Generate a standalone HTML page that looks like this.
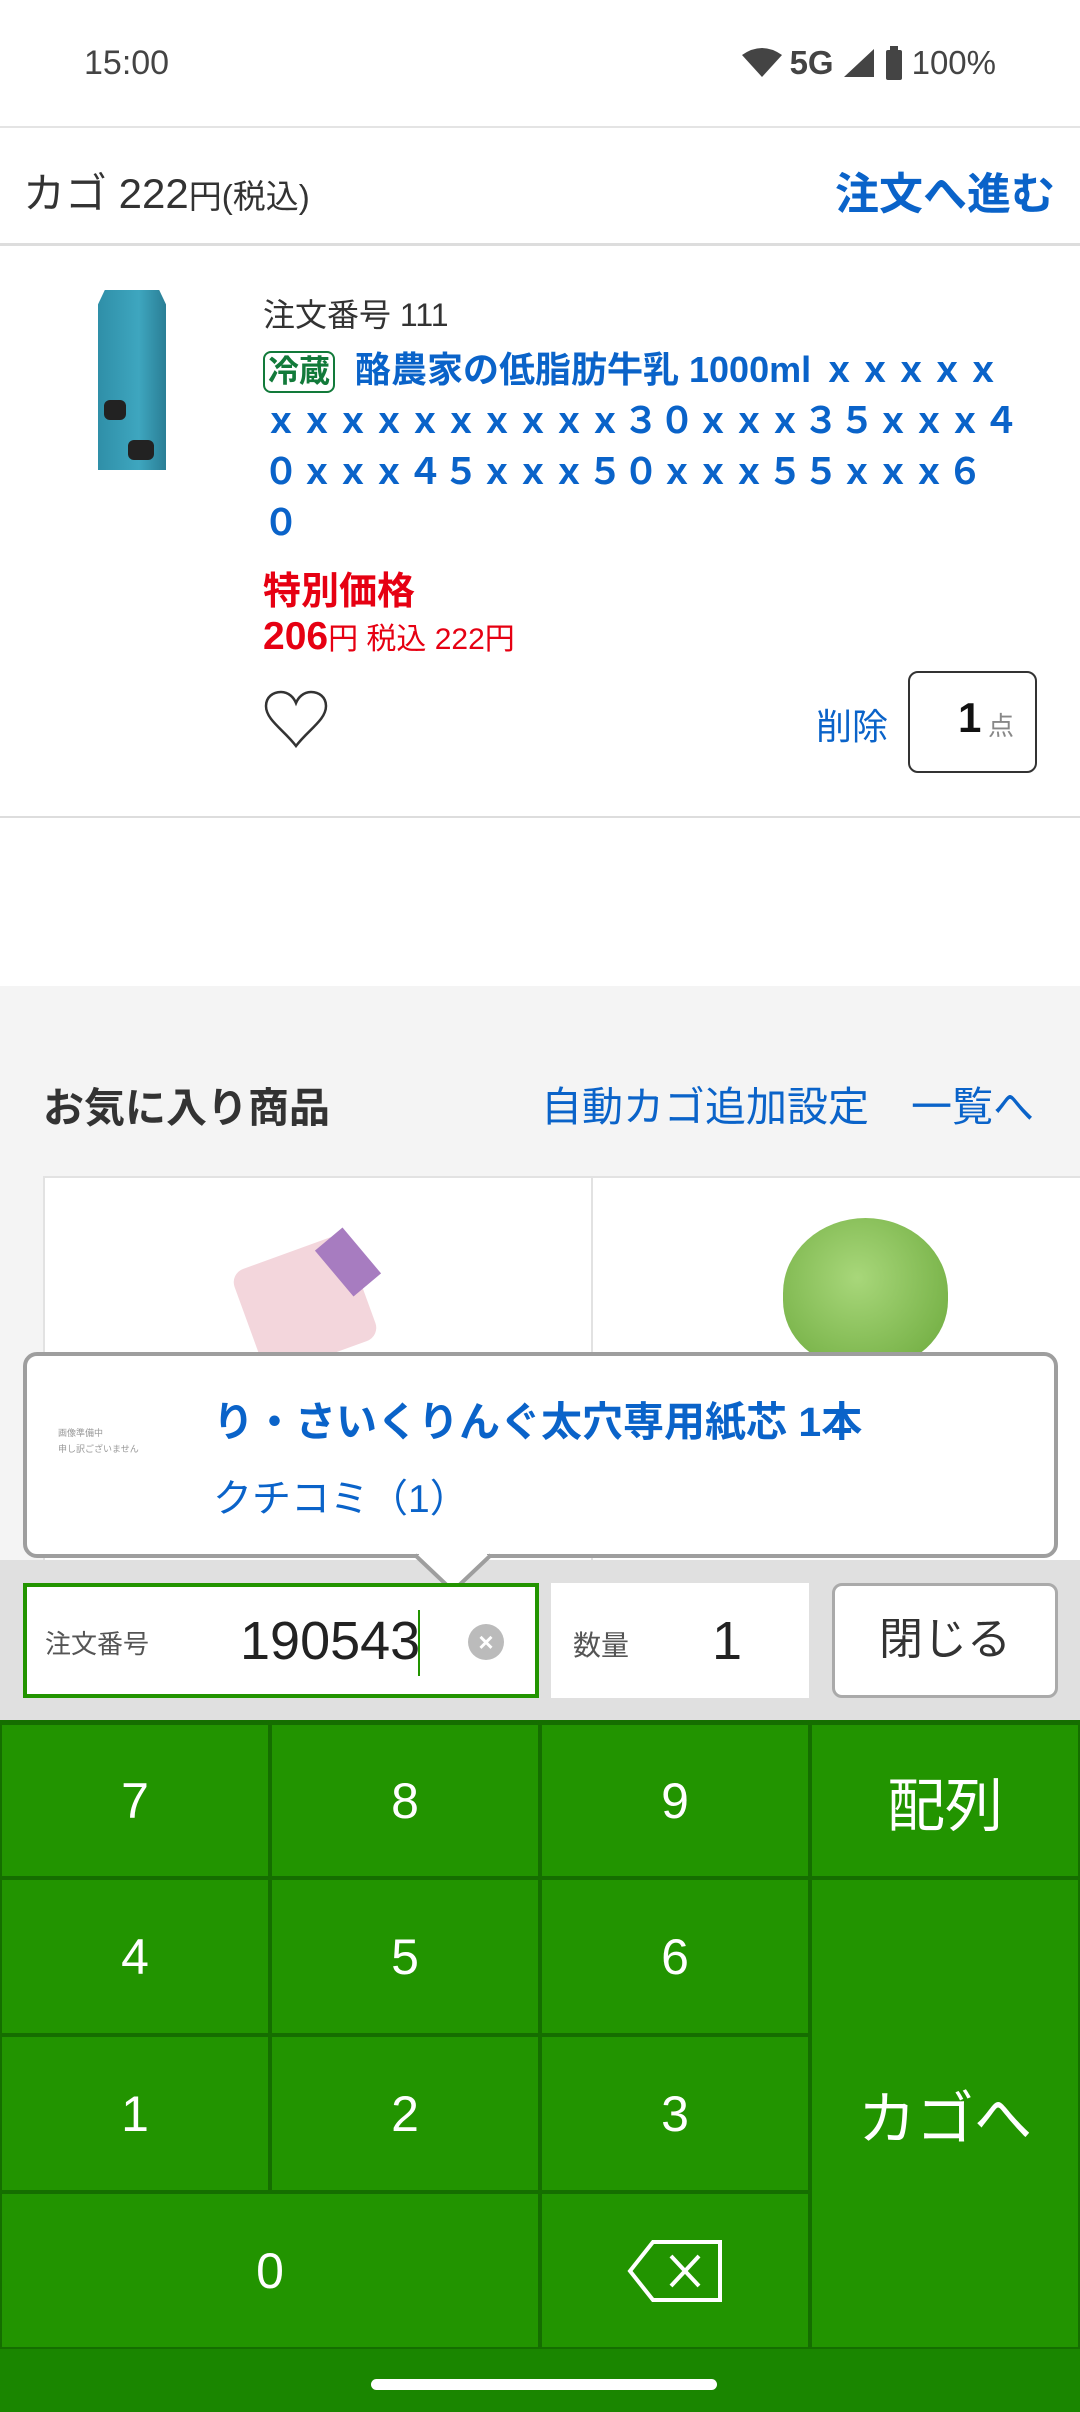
<!DOCTYPE html>
<html><head><meta charset="utf-8"><style>
*{margin:0;padding:0;box-sizing:border-box}
body{width:1080px;height:2412px;position:relative;overflow:hidden;background:#fff;font-family:"Liberation Sans","Noto Sans CJK JP",sans-serif;color:#222}
.a{position:absolute;white-space:nowrap}
.blue{color:#0a63c9}
.key{position:absolute;background:#229400;color:#fff;font-size:50px;display:flex;align-items:center;justify-content:center;border:2px solid #156e00}
</style></head><body>
<div class="a" style="left:84px;top:44px;font-size:34px;color:#444">15:00</div>
<div class="a" style="right:84px;top:44px;font-size:33px;color:#444;display:flex;align-items:center;gap:8px">
<svg width="40" height="32" viewBox="0 0 40 32"><path d="M20 30 L0 8 Q20 -6 40 8 Z" fill="#444"/></svg>
<span style="font-weight:bold">5G</span>
<svg width="34" height="32" viewBox="0 0 34 32"><path d="M32 2 V30 H2 Z" fill="#444"/></svg>
<svg width="20" height="34" viewBox="0 0 20 34"><rect x="2" y="4" width="16" height="30" rx="2" fill="#444"/><rect x="6" y="0" width="8" height="5" fill="#444"/></svg>
<span>100%</span></div>

<div class="a" style="left:0;top:126px;width:1080px;height:120px;border-top:2px solid #e4e4e4;border-bottom:3px solid #ddd"></div>
<div class="a" style="left:23px;top:160px;font-size:42px;color:#333">カゴ 222<span style="font-size:33px">円(税込)</span></div>
<div class="a blue" style="right:25px;top:158px;font-size:44px;font-weight:bold">注文へ進む</div>

<div class="a" style="left:98px;top:290px;width:68px;height:180px;background:linear-gradient(90deg,#2f8fa8,#3ea6bf 60%,#2a7e95);clip-path:polygon(10% 0,90% 0,100% 8%,100% 100%,0 100%,0 8%)"></div>
<div class="a" style="left:104px;top:400px;width:22px;height:20px;background:#222;border-radius:6px"></div>
<div class="a" style="left:128px;top:440px;width:26px;height:20px;background:#222;border-radius:6px"></div>

<div class="a" style="left:263px;top:290px;font-size:32px;color:#333">注文番号 111</div>
<div class="a blue" style="left:263px;top:344px;font-size:36px;font-weight:bold;line-height:51px;white-space:normal;width:800px">
<span style="display:inline-block;color:#127a3a;border:2px solid #127a3a;border-radius:8px;padding:0 3px;line-height:38px;font-size:31px;margin-right:20px">冷蔵</span>酪農家の低脂肪牛乳 1000ml ｘｘｘｘｘ<br>ｘｘｘｘｘｘｘｘｘｘ３０ｘｘｘ３５ｘｘｘ４<br>０ｘｘｘ４５ｘｘｘ５０ｘｘｘ５５ｘｘｘ６<br>０</div>
<div class="a" style="left:263px;top:560px;font-size:38px;font-weight:bold;color:#e60012">特別価格</div>
<div class="a" style="left:263px;top:614px;font-size:39px;font-weight:bold;color:#e60012">206<span style="font-size:30px;font-weight:normal">円 税込 222円</span></div>
<svg class="a" style="left:264px;top:690px" width="64" height="58" viewBox="0 0 64 58"><path d="M32 56 C20 40 2 30 2 16 C2 7 9 2 17 2 C25 2 30 8 32 13 C34 8 39 2 47 2 C55 2 62 7 62 16 C62 30 44 40 32 56 Z" fill="none" stroke="#333" stroke-width="2.5"/></svg>
<div class="a blue" style="left:816px;top:698px;font-size:36px">削除</div>
<div class="a" style="left:908px;top:671px;width:129px;height:102px;border:2px solid #333;border-radius:10px"></div>
<div class="a" style="left:958px;top:694px;font-size:42px;font-weight:bold;color:#111">1</div>
<div class="a" style="left:988px;top:706px;font-size:26px;color:#888">点</div>
<div class="a" style="left:0;top:816px;width:1080px;height:2px;background:#ddd"></div>

<div class="a" style="left:0;top:986px;width:1080px;height:740px;background:#f4f4f4"></div>
<div class="a" style="left:43px;top:1074px;font-size:41px;font-weight:bold;color:#333">お気に入り商品</div>
<div class="a blue" style="left:541px;top:1073px;font-size:41px">自動カゴ追加設定</div>
<div class="a blue" style="left:911px;top:1073px;font-size:41px">一覧へ</div>
<div class="a" style="left:43px;top:1176px;width:550px;height:560px;background:#fff;border:2px solid #e2e2e2"></div>
<div class="a" style="left:591px;top:1176px;width:500px;height:560px;background:#fff;border:2px solid #e2e2e2"></div>
<div class="a" style="left:245px;top:1250px;width:120px;height:110px;background:#f3d6dc;transform:rotate(-20deg);border-radius:14px"></div>
<div class="a" style="left:330px;top:1232px;width:36px;height:60px;background:#a77cc0;transform:rotate(-40deg)"></div>
<div class="a" style="left:783px;top:1218px;width:165px;height:150px;background:radial-gradient(circle at 45% 40%,#a8d77a,#6aa83a);border-radius:50% 50% 45% 45%"></div>

<div class="a" style="left:23px;top:1352px;width:1035px;height:206px;background:#fff;border:4px solid #9e9e9e;border-radius:14px"></div>
<div class="a" style="left:58px;top:1425px;font-size:9px;color:#999;line-height:16px">画像準備中<br>申し訳ございません</div>
<div class="a blue" style="left:213px;top:1388px;font-size:41px;font-weight:bold">り・さいくりんぐ太穴専用紙芯 1本</div>
<div class="a blue" style="left:213px;top:1468px;font-size:39px">クチコミ（1）</div>

<div class="a" style="left:0;top:1560px;width:1080px;height:162px;background:#e0e0e0"></div>
<svg class="a" style="left:415px;top:1553px" width="76" height="40" viewBox="0 0 76 40"><path d="M0 2 L38 38 L76 2" fill="#fff" stroke="#9e9e9e" stroke-width="4"/><rect x="4" y="-4" width="68" height="7" fill="#fff"/></svg>
<div class="a" style="left:23px;top:1583px;width:516px;height:115px;background:#fff;border:4px solid #229400"></div>
<div class="a" style="left:45px;top:1624px;font-size:26px;color:#555">注文番号</div>
<div class="a" style="left:240px;top:1610px;font-size:54px;color:#222">190543</div>
<div class="a" style="left:418px;top:1610px;width:2px;height:66px;background:#229400"></div>
<div class="a" style="left:468px;top:1624px;width:36px;height:36px;border-radius:50%;background:#bbb;color:#fff;font-size:26px;font-weight:bold;text-align:center;line-height:36px">×</div>
<div class="a" style="left:551px;top:1583px;width:258px;height:115px;background:#fff"></div>
<div class="a" style="left:573px;top:1624px;font-size:28px;color:#555">数量</div>
<div class="a" style="left:712px;top:1610px;font-size:54px;color:#222">1</div>
<div class="a" style="left:832px;top:1583px;width:226px;height:115px;background:#fff;border:3px solid #aaa;border-radius:10px;font-size:44px;color:#333;text-align:center;line-height:108px">閉じる</div>

<div class="a" style="left:0;top:1720px;width:1080px;height:630px;background:#156e00"></div>
<div class="key" style="left:0;top:1723px;width:270px;height:155px">7</div>
<div class="key" style="left:270px;top:1723px;width:270px;height:155px">8</div>
<div class="key" style="left:540px;top:1723px;width:270px;height:155px">9</div>
<div class="key" style="left:810px;top:1723px;width:270px;height:155px;font-size:58px">配列</div>
<div class="key" style="left:0;top:1878px;width:270px;height:157px">4</div>
<div class="key" style="left:270px;top:1878px;width:270px;height:157px">5</div>
<div class="key" style="left:540px;top:1878px;width:270px;height:157px">6</div>
<div class="key" style="left:810px;top:1878px;width:270px;height:471px;font-size:58px">カゴへ</div>
<div class="key" style="left:0;top:2035px;width:270px;height:157px">1</div>
<div class="key" style="left:270px;top:2035px;width:270px;height:157px">2</div>
<div class="key" style="left:540px;top:2035px;width:270px;height:157px">3</div>
<div class="key" style="left:0;top:2192px;width:540px;height:157px">0</div>
<div class="key" style="left:540px;top:2192px;width:270px;height:157px"><svg width="96" height="64" viewBox="0 0 96 64"><path d="M26 3 H93 V61 H26 L3 32 Z" fill="none" stroke="#fff" stroke-width="4"/><path d="M44 17 L72 47 M72 17 L44 47" stroke="#fff" stroke-width="4"/></svg></div>
<div class="a" style="left:0;top:2349px;width:1080px;height:63px;background:#1a8600"></div>
<div class="a" style="left:371px;top:2379px;width:346px;height:11px;border-radius:6px;background:#fff"></div>
</body></html>
